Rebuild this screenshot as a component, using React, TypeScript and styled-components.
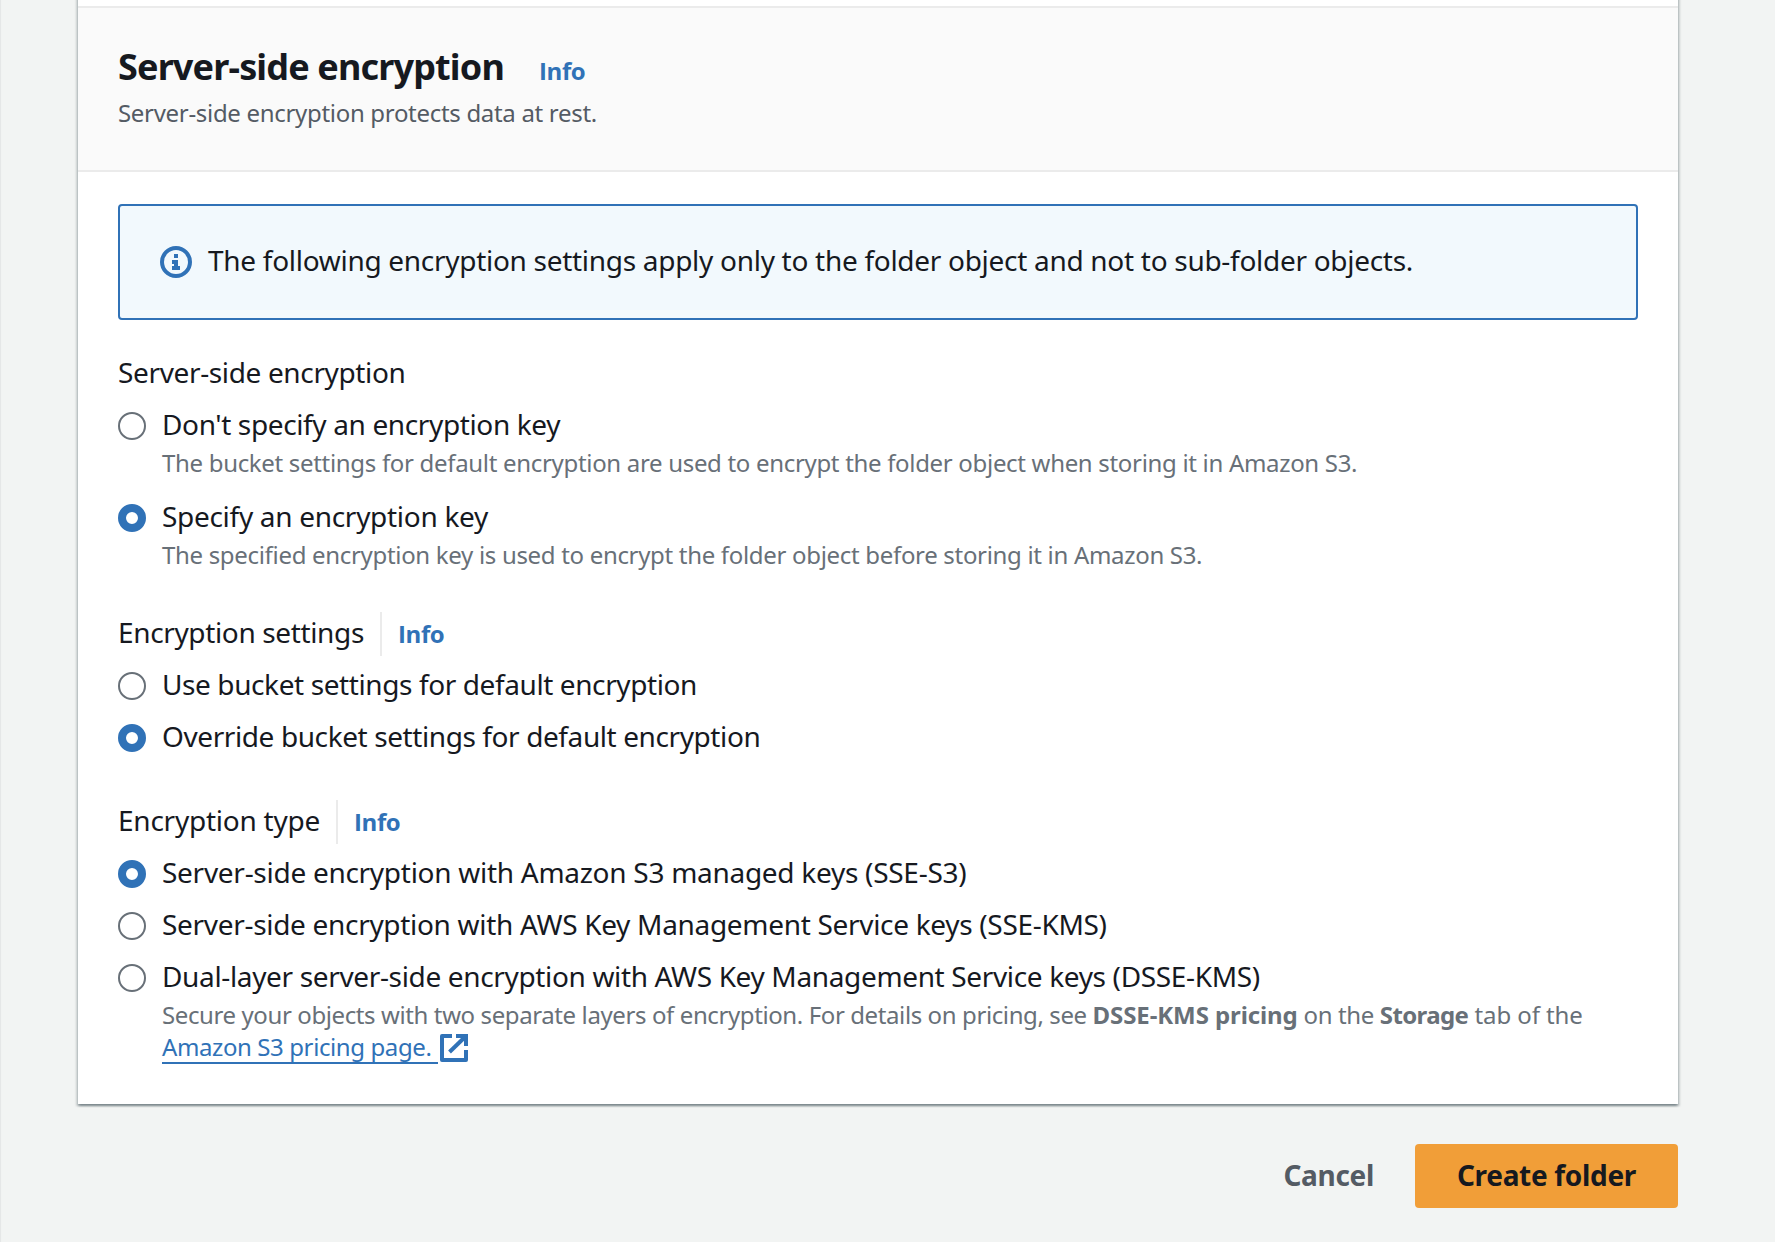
import React, { useState } from "react";
import styled, { createGlobalStyle } from "styled-components";

const blue = "#3072b7";
const sans = `"Noto Sans", "Open Sans", sans-serif`;

const GlobalStyle = createGlobalStyle`
  *, *::before, *::after { box-sizing: border-box; }
  body { margin: 0; background: #f2f4f3; }
`;

const Page = styled.main`
  height: 1242px;
  overflow: hidden;
  padding: 0 97px 0 78px;
  background: #f2f4f3;
  box-shadow: inset 2px 0 1px -1px #e4e6e6;
  color: #16191f;
  font-family: ${sans};
  font-size: 28px;
  line-height: 44px;
`;

const Card = styled.section`
  height: 1114px;
  margin-top: -10px;
  padding-top: 16px;
  background: #fff;
  box-shadow:
    0 2px 2px 0 rgba(0, 28, 36, 0.3),
    2px 2px 2px 0 rgba(0, 28, 36, 0.15),
    -2px 2px 2px 0 rgba(0, 28, 36, 0.15);
`;

const CardHeader = styled.header`
  height: 166px;
  padding: 37px 40px 0;
  border-top: 2px solid #ebebeb;
  border-bottom: 2px solid #ebebeb;
  background: #fafafa;
`;

const TitleRow = styled.div`
  display: flex;
  align-items: baseline;
  gap: 35px;
  height: 44px;
`;

const Title = styled.h2`
  margin: 0;
  font-size: 36px;
  font-weight: 700;
  line-height: 44px;
  letter-spacing: -0.85px;
`;

const InfoLink = styled.a`
  color: ${blue};
  font-family: "Open Sans", sans-serif;
  font-size: 24px;
  font-weight: 700;
  letter-spacing: -0.4px;
  text-decoration: none;
  white-space: nowrap;
`;

const Subtitle = styled.p`
  margin: 8px 0 0;
  color: #545b64;
  font-size: 24px;
  line-height: 32px;
  letter-spacing: -0.31px;
`;

const CardBody = styled.div`
  display: flex;
  flex-direction: column;
  padding: 32px 40px 0;
`;

const Alert = styled.div`
  display: flex;
  align-items: flex-start;
  gap: 16px;
  height: 116px;
  padding: 32px 40px;
  border: 2px solid ${blue};
  border-radius: 4px;
  background: #f2f9fd;
  letter-spacing: -0.29px;

  svg {
    flex: none;
    margin-top: 8px;
  }
`;

const FieldSet = styled.div<{ $top: number }>`
  margin-top: ${(p) => p.$top}px;
`;

const FieldLabel = styled.div<{ $track: number }>`
  display: flex;
  height: 44px;
  margin-bottom: 8px;
  white-space: nowrap;
  letter-spacing: ${(p) => p.$track}px;
`;

const LabelInfo = styled.span`
  display: flex;
  align-items: baseline;
  height: 44px;
  margin: 2px 0 0 16px;
  padding-left: 16px;
  border-left: 2px solid #ebebeb;
  line-height: 43px;
`;

const Options = styled.div<{ $gap: number }>`
  display: flex;
  flex-direction: column;
  gap: ${(p) => p.$gap}px;
`;

const Option = styled.label`
  display: flex;
  align-items: flex-start;
  gap: 16px;
  cursor: pointer;
`;

const Radio = styled.input`
  flex: none;
  appearance: none;
  width: 28px;
  height: 28px;
  margin: 10px 0 0;
  border: 2px solid #687078;
  border-radius: 50%;
  background: #fff;

  &:checked {
    border: 8px solid ${blue};
  }
`;

const OptionText = styled.div`
  flex: 1;
  min-width: 0;
`;

const OptionTitle = styled.div<{ $track: number }>`
  white-space: nowrap;
  letter-spacing: ${(p) => p.$track}px;
`;

const OptionDescription = styled.div`
  margin: 1px 0 -1px;
  color: #687078;
  font-size: 24px;
  line-height: 32px;
  letter-spacing: -0.315px;
`;

const Run = styled.span<{ $track: number }>`
  letter-spacing: ${(p) => p.$track}px;
`;

const Strong = styled.strong<{ $track: number }>`
  font-weight: 700;
  letter-spacing: ${(p) => p.$track}px;
`;

const ExternalLink = styled.a`
  display: flex;
  align-items: flex-start;
  height: 33px;
  color: ${blue};
  text-decoration: none;
  letter-spacing: -0.4px;

  svg {
    flex: none;
    margin: 3px 0 0 2px;
  }
`;

const LinkText = styled.span`
  width: 276px;
  height: 33px;
  border-bottom: 2px solid ${blue};
  white-space: nowrap;
`;

const Actions = styled.footer`
  display: flex;
  justify-content: flex-end;
  padding-top: 40px;
`;

const Button = styled.button<{ $primary?: boolean }>`
  height: 64px;
  padding: 0 ${(p) => (p.$primary ? 42 : 41)}px 2px;
  border: 0;
  border-radius: 4px;
  background: ${(p) => (p.$primary ? "#f19e38" : "transparent")};
  color: ${(p) => (p.$primary ? "#16191f" : "#545b64")};
  font: 700 28px/44px ${sans};
  letter-spacing: -0.32px;
  cursor: pointer;
`;

function InfoIcon() {
  return (
    <svg width="32" height="32" viewBox="0 0 32 32" fill={blue} aria-hidden="true">
      <circle cx="16" cy="16" r="14" fill="none" stroke={blue} strokeWidth="4" />
      <path d="M14 8h4v4h-4zM12 14h6v6h2v4h-8v-4h2v-2h-2z" />
    </svg>
  );
}

function ExternalIcon() {
  return (
    <svg width="28" height="28" viewBox="0 0 28 28" fill="none" stroke={blue} strokeWidth="4" aria-hidden="true">
      <path d="M12 2H2v24h24V16" strokeLinejoin="round" />
      <path d="M16 2h10v10" />
      <path d="M25 3 9.5 18" />
    </svg>
  );
}

type Choice = { title: string; track: number; description?: React.ReactNode };

type GroupProps = {
  label: string;
  track: number;
  info?: boolean;
  top: number;
  gap: number;
  initial: number;
  choices: Choice[];
};

function RadioGroup({ label, track, info, top, gap, initial, choices }: GroupProps) {
  const [selected, setSelected] = useState(initial);
  return (
    <FieldSet $top={top} role="radiogroup" aria-label={label}>
      <FieldLabel $track={track}>
        <span>{label}</span>
        {info && (
          <LabelInfo>
            <InfoLink>Info</InfoLink>
          </LabelInfo>
        )}
      </FieldLabel>
      <Options $gap={gap}>
        {choices.map((choice, i) => (
          <Option key={choice.title}>
            <Radio type="radio" name={label} checked={selected === i} onChange={() => setSelected(i)} />
            <OptionText>
              <OptionTitle $track={choice.track}>{choice.title}</OptionTitle>
              {choice.description && <OptionDescription>{choice.description}</OptionDescription>}
            </OptionText>
          </Option>
        ))}
      </Options>
    </FieldSet>
  );
}

export default function App() {
  return (
    <>
      <GlobalStyle />
      <Page>
        <Card>
          <CardHeader>
            <TitleRow>
              <Title>Server-side encryption</Title>
              <InfoLink>Info</InfoLink>
            </TitleRow>
            <Subtitle>Server-side encryption protects data at rest.</Subtitle>
          </CardHeader>
          <CardBody>
            <Alert>
              <InfoIcon />
              <span>
                The following encryption settings apply only to the folder object and not to sub-folder objects.
              </span>
            </Alert>
            <RadioGroup
              label="Server-side encryption"
              track={-0.36}
              top={30}
              gap={16}
              initial={1}
              choices={[
                {
                  title: "Don't specify an encryption key",
                  track: -0.37,
                  description:
                    "The bucket settings for default encryption are used to encrypt the folder object when storing it in Amazon S3.",
                },
                {
                  title: "Specify an encryption key",
                  track: -0.3,
                  description:
                    "The specified encryption key is used to encrypt the folder object before storing it in Amazon S3.",
                },
              ]}
            />
            <RadioGroup
              label="Encryption settings"
              track={-0.36}
              info
              top={40}
              gap={8}
              initial={1}
              choices={[
                { title: "Use bucket settings for default encryption", track: -0.4 },
                { title: "Override bucket settings for default encryption", track: -0.405 },
              ]}
            />
            <RadioGroup
              label="Encryption type"
              track={-0.24}
              info
              top={40}
              gap={8}
              initial={0}
              choices={[
                { title: "Server-side encryption with Amazon S3 managed keys (SSE-S3)", track: -0.28 },
                { title: "Server-side encryption with AWS Key Management Service keys (SSE-KMS)", track: -0.31 },
                {
                  title: "Dual-layer server-side encryption with AWS Key Management Service keys (DSSE-KMS)",
                  track: -0.35,
                  description: (
                    <>
                      <Run $track={-0.395}>
                        Secure your objects with two separate layers of encryption. For details on pricing, see{" "}
                      </Run>
                      <Strong $track={-0.09}>DSSE-KMS pricing</Strong>
                      <Run $track={-0.38}> on the </Run>
                      <Strong $track={-0.6}>Storage</Strong>
                      <Run $track={-0.1}> tab of the</Run>
                      <ExternalLink>
                        <LinkText>Amazon S3 pricing page.</LinkText>
                        <ExternalIcon />
                      </ExternalLink>
                    </>
                  ),
                },
              ]}
            />
          </CardBody>
        </Card>
        <Actions>
          <Button type="button">Cancel</Button>
          <Button type="button" $primary>
            Create folder
          </Button>
        </Actions>
      </Page>
    </>
  );
}
